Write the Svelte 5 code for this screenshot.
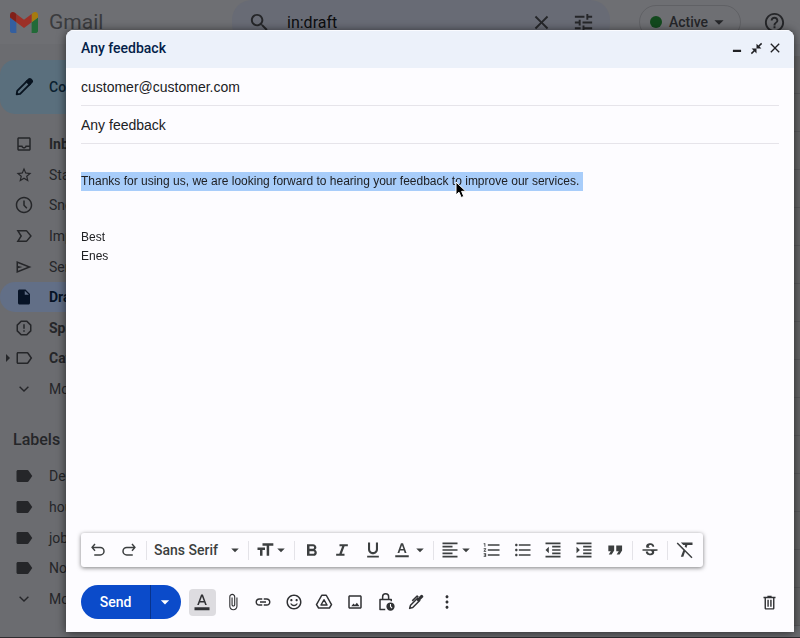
<script>
  const icons = {
    inbox: { fill: 'M19 3H5c-1.1 0-2 .9-2 2v14c0 1.1.9 2 2 2h14c1.1 0 2-.9 2-2V5c0-1.1-.9-2-2-2zm0 16H5v-3h3.56c.69 1.19 1.97 2 3.45 2s2.75-.81 3.45-2H19v3zm0-5h-4.99c0 1.1-.9 2-2 2s-2-.9-2-2H5V5h14v9z' },
    star: { fill: 'M22 9.24l-7.19-.62L12 2 9.19 8.63 2 9.24l5.46 4.73L5.82 21 12 17.27 18.18 21l-1.63-7.03L22 9.24zM12 15.4l-3.76 2.27 1-4.28-3.32-2.88 4.38-.38L12 6.1l1.71 4.04 4.38.38-3.32 2.88 1 4.28L12 15.4z' },
    clock: { fill: 'M12 1C5.93 1 1 5.93 1 12s4.93 11 11 11 11-4.93 11-11S18.07 1 12 1zm0 20c-4.97 0-9-4.03-9-9s4.03-9 9-9 9 4.03 9 9-4.03 9-9 9zM11 6h2v6l3.5 3.8-1.4 1.2L11 12.8z' },
    important: { fill: 'M15 20H2l5-8-5-8h13c.65 0 1.26.31 1.63.84L22.500 12l-5.870 7.160c-.37.52-.98.84-1.63.84zM5.600 18H15l5-6-5-6H5.600l3.800 6z' },
    send: { fill: 'M2 20V4l20 8-20 8zm2-3l12.500-5L4 7v3.500l6 1.500-6 1.500V17z' },
    draft: { fill: 'M14 2H6c-1.1 0-2 .9-2 2v16c0 1.1.89 2 1.99 2H18c1.1 0 2-.9 2-2V8l-6-6zm-1 7V3.500L18.500 9H13z' },
    spam: { fill: 'M16.200 2H7.800L2 7.800v8.400L7.800 22h8.400L22 16.200V7.800L16.200 2zM20 15.300L15.300 20H8.700L4 15.300V8.700L8.700 4h6.600L20 8.700v6.600zM11 7h2v6h-2zM11 15h2v2h-2z' },
    category: { fill: 'M16.500 4H4c-1.100 0-2 .9-2 2v12c0 1.100.9 2 2 2h12.500c.67 0 1.270-.33 1.630-.84L23 12l-4.870-7.160C17.770 4.330 17.170 4 16.500 4zM16.200 18H4V6h12.200l4.300 6z' },
    label: { fill: 'M16.500 4H4c-1.100 0-2 .9-2 2v12c0 1.100.9 2 2 2h12.500c.67 0 1.270-.33 1.630-.84L23 12l-4.870-7.160C17.770 4.330 17.170 4 16.500 4z' },
    expand: { fill: 'M17.200 8.200L12 13.400 6.800 8.200 5.500 9.500l6.500 6.500 6.500-6.500z' },
    search: { fill: 'M15.5 14h-.79l-.28-.27C15.41 12.59 16 11.11 16 9.5 16 5.91 13.09 3 9.5 3S3 5.91 3 9.5 5.91 16 9.5 16c1.61 0 3.09-.59 4.23-1.57l.27.28v.79l5 4.99L20.49 19l-4.99-5zm-6 0C7.01 14 5 11.99 5 9.5S7.01 5 9.5 5 14 7.01 14 9.5 11.99 14 9.5 14z' },
    close: { fill: 'M19 6.41L17.59 5 12 10.59 6.41 5 5 6.41 10.59 12 5 17.59 6.41 19 12 13.41 17.59 19 19 17.59 13.41 12z' },
    tune: { fill: 'M3 17v2h6v-2H3zM3 5v2h10V5H3zm10 16v-2h8v-2h-8v-2h-2v6h2zM7 9v2H3v2h4v2h2V9H7zm14 4v-2H11v2h10zm-6-4h2V7h4V5h-4V3h-2v6z' },
    help: { fill: 'M11 18h2v-2h-2v2zm1-16C6.48 2 2 6.48 2 12s4.48 10 10 10 10-4.48 10-10S17.52 2 12 2zm0 18c-4.41 0-8-3.59-8-8s3.59-8 8-8 8 3.59 8 8-3.59 8-8 8zm0-14c-2.21 0-4 1.79-4 4h2c0-1.1.9-2 2-2s2 .9 2 2c0 2-3 1.75-3 5h2c0-2.25 3-2.5 3-5 0-2.21-1.79-4-4-4z' },
    edit: { stroke: 'M4 20l.6-3.800L15.500 5.300l3.200 3.200L7.800 19.400z', fill: 'M13.500 6l3.200-3.200c1-1 2.300-.9 3.200 0l1.300 1.300c.9.900 1 2.200 0 3.200L18 10.500z' },
    minimize: { fill: 'M5 15h14v4H5z' },
    collapse: { fill: 'M22.500 3.500L17.500 8.500 21 12h-9V3l3.500 3.500 5-5zM3.500 22.500l5-5L12 21v-9H3l3.500 3.500-5 5z' },
    undo: { stroke: 'M8 4L4 8.500l4 4.500M4.500 8.500H15a5 5 0 0 1 0 10H7' },
    redo: { stroke: 'M16 4l4 4.500-4 4.500M19.500 8.500H9a5 5 0 0 0 0 10h8' },
    caret: { fill: 'M7 10l5 5 5-5z' },
    size: { fill: 'M9 4v3h5v12h3V7h5V4H9zm-6 8h3v7h3v-7h3V9H3v3z' },
    bold: { fill: 'M15.600 11.790c.97-.67 1.650-1.770 1.650-2.790 0-2.260-1.750-4-4-4H6v14h8.040c2.090 0 3.710-1.700 3.710-3.790 0-1.520-.86-2.820-2.150-3.420zM9 7.500h4c.83 0 1.500.67 1.500 1.500s-.67 1.500-1.500 1.500H9v-3zm4.500 9H9v-3h4.500c.83 0 1.500.67 1.500 1.500s-.67 1.500-1.500 1.500z' },
    italic: { fill: 'M9 5v2.500h3.200l-3.400 9H5V19h10v-2.500h-3.300l3.400-9H19V5z' },
    underline: { fill: 'M12 17c3.310 0 6-2.690 6-6V3h-2.500v8c0 1.930-1.570 3.500-3.500 3.500S8.500 12.930 8.500 11V3H6v8c0 3.310 2.690 6 6 6zm-7 2v2h14v-2H5z' },
    color: { fill: 'M3 19v2.500h18V19H3zm6.500-6.200h5l1 3.200H18L13.400 3h-2.800L6 16h2.500l1-3.200zM12 5.500l1.900 5.300h-3.800L12 5.500z' },
    format: { fill: 'M2 19v4h20v-4H2zm7-6.200h6l1.200 3.200h2.200L13.200 2h-2.400L5.600 16h2.200l1.200-3.200zM12 4.500l2.300 6.300H9.700L12 4.500z' },
    align: { fill: 'M15 15H3v2h12v-2zm0-8H3v2h12V7zM3 13h18v-2H3v2zm0 8h18v-2H3v2zM3 3v2h18V3H3z' },
    numbered: { fill: 'M2 17h2v.5H3v1h1v.5H2v1h3v-4H2v1zm1-9h1V4H2v1h1v3zm-1 3h1.8L2 13.1v.9h3v-1H3.2L5 10.9V10H2v1zm5-6v2h14V5H7zm0 14h14v-2H7v2zm0-6h14v-2H7v2z' },
    bulleted: { fill: 'M4 10.5c-.83 0-1.5.67-1.5 1.5s.67 1.5 1.5 1.5 1.5-.67 1.5-1.5-.67-1.5-1.5-1.5zm0-6c-.83 0-1.5.67-1.5 1.5S3.17 7.5 4 7.5 5.5 6.83 5.5 6 4.83 4.5 4 4.5zm0 12c-.83 0-1.5.68-1.5 1.5s.68 1.5 1.5 1.5 1.5-.68 1.5-1.5-.67-1.5-1.5-1.5zM7 19h14v-2H7v2zm0-6h14v-2H7v2zm0-8v2h14V5H7z' },
    outdent: { fill: 'M11 17h10v-2H11v2zm-8-5l4 4V8l-4 4zm0 9h18v-2H3v2zM3 3v2h18V3H3zm8 6h10V7H11v2zm0 4h10v-2H11v2z' },
    indent: { fill: 'M3 21h18v-2H3v2zM3 8v8l4-4-4-4zm8 9h10v-2H11v2zM3 3v2h18V3H3zm8 6h10V7H11v2zm0 4h10v-2H11v2z' },
    quote: { fill: 'M4.500 17.500h3.500l3-5V6.500H4v7h3zm9.500 0h3.500l3-5V6.500h-7v7h3z' },
    strike: { fill: 'M7.24 8.75c-.26-.48-.39-1.03-.39-1.67 0-.61.13-1.16.4-1.67.26-.5.63-.93 1.11-1.29.48-.35 1.05-.63 1.7-.83.66-.19 1.39-.29 2.18-.29.81 0 1.54.11 2.21.34.66.22 1.23.54 1.69.94.47.4.83.88 1.08 1.43.25.55.38 1.15.38 1.81h-2.5c0-.31-.05-.59-.15-.85-.09-.27-.24-.49-.44-.68-.2-.19-.45-.33-.75-.44-.3-.1-.66-.16-1.06-.16-.39 0-.74.04-1.03.13-.29.09-.53.21-.72.36-.19.16-.34.34-.44.55-.1.21-.15.43-.15.66 0 .48.25.88.74 1.21.38.25.77.48 1.41.7H7.39c-.05-.08-.11-.17-.15-.25zM22 13v-2H2v2h10.620c.18.07.4.14.55.2.37.17.66.34.87.51.21.17.35.36.43.57.07.2.11.43.11.69 0 .23-.05.45-.14.66-.09.2-.23.38-.42.53-.19.15-.42.26-.71.35-.29.08-.63.13-1.01.13-.43 0-.83-.04-1.18-.13s-.66-.23-.91-.42c-.25-.19-.45-.44-.59-.75-.14-.31-.25-.76-.25-1.21H6.4c0 .55.08 1.13.24 1.58.16.45.37.85.65 1.21.28.35.6.66.98.92.37.26.78.48 1.22.65.44.17.9.3 1.38.39.48.08.96.13 1.44.13.8 0 1.53-.09 2.18-.28s1.21-.45 1.67-.79c.46-.34.82-.77 1.07-1.27s.38-1.07.38-1.71c0-.6-.1-1.14-.31-1.61z' },
    clear: { fill: 'M3.270 3L2 4.270l7.970 7.970L7 20h3l1.970-5.760L19.730 22 21 20.730zM7 3l2.900 3h2.300l-.6 1.700 2 2L14.900 6H21V3z' },
    attach: { fill: 'M16.5 6v11.5c0 2.21-1.79 4-4 4s-4-1.79-4-4V5c0-1.38 1.12-2.5 2.5-2.5s2.5 1.12 2.5 2.5v10.5c0 .55-.45 1-1 1s-1-.45-1-1V6H10v9.5c0 1.38 1.12 2.5 2.5 2.5s2.5-1.12 2.5-2.5V5c0-2.21-1.79-4-4-4S7 2.79 7 5v12.5c0 3.04 2.46 5.500 5.500 5.500s5.500-2.460 5.500-5.500V6h-1.500z' },
    link: { fill: 'M3.9 12c0-1.71 1.39-3.1 3.1-3.1h4V7H7c-2.76 0-5 2.24-5 5s2.24 5 5 5h4v-1.9H7c-1.71 0-3.1-1.39-3.1-3.1zM8 13h8v-2H8v2zm9-6h-4v1.9h4c1.71 0 3.1 1.39 3.1 3.1s-1.39 3.1-3.1 3.1h-4V17h4c2.76 0 5-2.24 5-5s-2.24-5-5-5z' },
    emoji: { fill: 'M11.99 2C6.47 2 2 6.48 2 12s4.47 10 9.99 10C17.52 22 22 17.52 22 12S17.52 2 11.99 2zM12 20c-4.42 0-8-3.58-8-8s3.58-8 8-8 8 3.58 8 8-3.58 8-8 8zm3.5-9c.83 0 1.5-.67 1.5-1.5S16.330 8 15.500 8 14 8.670 14 9.500s.67 1.500 1.500 1.500zm-7 0c.83 0 1.500-.67 1.500-1.500S9.330 8 8.500 8 7 8.670 7 9.500 7.670 11 8.500 11zm3.500 6.500c2.330 0 4.310-1.460 5.110-3.500h-1.900c-.7 1.100-1.900 1.800-3.210 1.800S9.500 15.100 8.800 14H6.890c.8 2.040 2.780 3.500 5.110 3.500z' },
    drive: { stroke: 'M9 3h6l7 12.500-2.800 4.500H4.800L2 15.500zM12 9l4 7H8z' },
    image: { fill: 'M19 5v14H5V5h14m0-2H5c-1.1 0-2 .9-2 2v14c0 1.1.9 2 2 2h14c1.1 0 2-.9 2-2V5c0-1.1-.9-2-2-2zM14.500 13l-2.500 3-2-2-3 3.500h11z' },
    lock: { stroke: 'M11 22H4V8.500h15V11M7.500 8.500V5a4 4 0 0 1 8 0v3.500', fill: 'M18 12.500a5.500 5.500 0 1 0 0 11 5.500 5.500 0 0 0 0-11zm-.7 2.300h1.400v2.900l1.900 1.900-1 1-2.300-2.300z' },
    pen: { stroke: 'M3.500 20.500l1.200-4.200L14 7l3 3-9.300 9.300zM7 10.500l6.500-6.500 1.500 1.500', fill: 'M12.500 9l5.300-5.600c1.300-1.300 2.400-1.200 3.300-.2.900.9.900 2 0 2.900L15 12z' },
    more: { fill: 'M12 7c1.100 0 2-.9 2-2s-.9-2-2-2-2 .9-2 2 .9 2 2 2zm0 3c-1.100 0-2 .9-2 2s.9 2 2 2 2-.9 2-2-.9-2-2-2zm0 7c-1.100 0-2 .9-2 2s.9 2 2 2 2-.9 2-2-.9-2-2-2z' },
    trash: { fill: 'M15 4V2.500H9V4H3.500v2H5v14c0 1.100.9 2 2 2h10c1.100 0 2-.9 2-2V6h1.500V4zM17 20H7V6h10zM9 8h2v10H9zm4 0h2v10h-2z' }
  };

  const folders = [
    { icon: 'inbox', name: 'Inbox', strong: true },
    { icon: 'star', name: 'Starred' },
    { icon: 'clock', name: 'Snoozed' },
    { icon: 'important', name: 'Important' },
    { icon: 'send', name: 'Sent' },
    { icon: 'draft', name: 'Drafts', strong: true, current: true },
    { icon: 'spam', name: 'Spam', strong: true },
    { icon: 'category', name: 'Categories', strong: true, nested: true },
    { icon: 'expand', name: 'More' }
  ];

  const labels = [
    { icon: 'label', name: 'Design' },
    { icon: 'label', name: 'house' },
    { icon: 'label', name: 'jobs' },
    { icon: 'label', name: 'Notes' },
    { icon: 'expand', name: 'More' }
  ];

  const styles = [['bold', 'Bold'], ['italic', 'Italic'], ['underline', 'Underline']];
  const blocks = [
    ['numbered', 'Numbered list'],
    ['bulleted', 'Bulleted list'],
    ['outdent', 'Indent less'],
    ['indent', 'Indent more'],
    ['quote', 'Quote']
  ];
  const inserts = [
    ['format', 'Formatting options'],
    ['attach', 'Attach files'],
    ['link', 'Insert link'],
    ['emoji', 'Insert emoji'],
    ['drive', 'Insert files using Drive'],
    ['image', 'Insert photo'],
    ['lock', 'Confidential mode'],
    ['pen', 'Insert signature'],
    ['more', 'More options']
  ];

  let query = $state('in:draft');
  let to = $state('customer@customer.com');
  let subject = $state('Any feedback');
  let formatting = $state(true);
</script>

{#snippet icon(name, size)}
  <svg viewBox="0 0 24 24" width={size} height={size} aria-hidden="true">
    {#if icons[name].fill}<path d={icons[name].fill} fill="currentColor" fill-rule="evenodd" />{/if}
    {#if icons[name].stroke}
      <path d={icons[name].stroke} fill="none" stroke="currentColor" stroke-width="2" stroke-linejoin="round" />
    {/if}
  </svg>
{/snippet}

{#snippet navList(items)}
  {#each items as item}
    <a href="#{item.name}" class:strong={item.strong} class:current={item.current}>
      <span class="twisty">{#if item.nested}<i></i>{/if}</span>
      {@render icon(item.icon, 18)}
      <span class="name">{item.name}</span>
    </a>
  {/each}
{/snippet}

<div class="app">
  <header>
    <div class="brand">
      <svg viewBox="52 42 88 66" width="28" height="21" aria-hidden="true">
        <path fill="#345f9f" d="M58 108h14V74L52 59v43c0 3.320 2.690 6 6 6" />
        <path fill="#226a38" d="M120 108h14c3.320 0 6-2.690 6-6V59l-20 15" />
        <path fill="#a67b0e" d="M120 48v26l20-15v-8c0-7.420-8.470-11.650-14.400-7.200" />
        <path fill="#9c3027" d="M72 74V48l24 18 24-18v26L96 92" />
        <path fill="#812019" d="M52 51v8l20 15V48l-5.600-4.200c-5.940-4.450-14.400-.22-14.400 7.200" />
      </svg>
      <span>Gmail</span>
    </div>
    <form class="search" role="search">
      {@render icon('search', 23)}
      <input aria-label="Search mail" bind:value={query} />
      <button type="button" aria-label="Clear search">{@render icon('close', 23)}</button>
      <button type="button" aria-label="Search options">{@render icon('tune', 23)}</button>
    </form>
    <button class="status"><i></i>Active{@render icon('caret', 22)}</button>
    <button class="help" aria-label="Support">{@render icon('help', 23)}</button>
  </header>

  <div class="columns">
    <aside>
      <button class="compose">{@render icon('edit', 22)}<span>Compose</span></button>
      <nav class="folders" aria-label="Folders">{@render navList(folders)}</nav>
      <h2>Labels</h2>
      <nav class="labels" aria-label="Labels">{@render navList(labels)}</nav>
    </aside>
    <main>
      {#each Array(15) as _}<div class="mail"></div>{/each}
    </main>
  </div>
</div>

<div class="dialog" role="dialog" aria-label="Any feedback">
  <div class="title">
    <h1>Any feedback</h1>
    <button aria-label="Minimize">{@render icon('minimize', 14)}</button>
    <button aria-label="Exit full screen">{@render icon('collapse', 13)}</button>
    <button aria-label="Save and close">{@render icon('close', 16)}</button>
  </div>

  <div class="fields">
    <input aria-label="To" bind:value={to} />
    <input aria-label="Subject" bind:value={subject} />
  </div>

  <div class="message" role="textbox" aria-label="Message body" aria-multiline="true" tabindex="0">
    <p class="marked"><mark>Thanks for using us, we are looking forward to hearing your feedback to improve our services.</mark></p>
    <p>Best</p>
    <p>Enes</p>
    <svg class="pointer" viewBox="0 0 12 18" width="12" height="18" aria-hidden="true">
      <path d="M1 1v13l3-2.800 2.200 5.300 2.600-1.100-2.200-5.100h4.200z" fill="#000" stroke="#fff" stroke-width="1" />
    </svg>
  </div>

  {#if formatting}
    <div class="toolbar" role="toolbar" aria-label="Formatting">
      <div class="history">
        <button aria-label="Undo">{@render icon('undo', 18)}</button>
        <button aria-label="Redo">{@render icon('redo', 18)}</button>
      </div>
      <hr />
      <label class="font">
        <select aria-label="Font">
          <option>Sans Serif</option>
          <option>Serif</option>
        </select>
        {@render icon('caret', 18)}
      </label>
      <hr />
      <button class="drop" aria-label="Size">{@render icon('size', 20)}{@render icon('caret', 18)}</button>
      <hr />
      <div class="styles">
        {#each styles as [name, title]}<button aria-label={title}>{@render icon(name, 20)}</button>{/each}
      </div>
      <button class="drop color" aria-label="Text color">{@render icon('color', 18)}{@render icon('caret', 18)}</button>
      <hr />
      <button class="drop" aria-label="Align">{@render icon('align', 20)}{@render icon('caret', 18)}</button>
      <div class="blocks">
        {#each blocks as [name, title]}<button aria-label={title}>{@render icon(name, 20)}</button>{/each}
      </div>
      <hr />
      <button class="single" aria-label="Strikethrough">{@render icon('strike', 18)}</button>
      <hr />
      <button class="single" aria-label="Remove formatting">{@render icon('clear', 20)}</button>
    </div>
  {/if}

  <div class="actions">
    <div class="send">
      <button>Send</button>
      <button class="more" aria-label="More send options">{@render icon('caret', 20)}</button>
    </div>
    <div class="inserts">
      {#each inserts as [name, title]}
        <button
          aria-label={title}
          class:pressed={name === 'format' && formatting}
          onclick={() => { if (name === 'format') formatting = !formatting; }}
        ><span>{@render icon(name, 18)}</span></button>
      {/each}
    </div>
    <button class="discard" aria-label="Discard draft">{@render icon('trash', 17)}</button>
  </div>
</div>

<style>
  :global(body) {
    margin: 0;
    background: #6b6c70;
    font-family: Roboto, "Liberation Sans", sans-serif;
  }
  button, input, select {
    border: 0;
    padding: 0;
    margin: 0;
    background: none;
    color: inherit;
    font: inherit;
    outline: 0;
  }
  button {
    display: flex;
    align-items: center;
    justify-content: center;
  }
  svg { display: block; flex: none; }
  h1, h2, p { margin: 0; }

  .app {
    box-sizing: border-box;
    height: 100vh;
    overflow: hidden;
    border-bottom: 1px solid #2e2d30;
    color: #252629;
  }
  header {
    display: flex;
    height: 44px;
    background: #6e6f73;
    box-sizing: border-box;
  }
  .brand {
    display: flex;
    align-items: center;
    gap: 11px;
    width: 222px;
    padding-left: 10px;
    color: #3a3b3e;
    font-size: 21px;
  }
  .search {
    display: flex;
    align-items: center;
    flex: 1;
    min-width: 0;
    padding: 0 15px 0 16px;
    border-radius: 20px;
    background: #686b75;
  }
  .search input {
    flex: 1;
    min-width: 0;
    margin-left: 16px;
    color: #0c0d0f;
    font-size: 16px;
  }
  .search button + button { margin-left: 19px; }
  .status {
    width: 102px;
    height: 34px;
    margin: 5px 0 0 29px;
    border: 1px solid #606165;
    border-radius: 17px;
    font-size: 14px;
    font-weight: 500;
  }
  .status i {
    width: 12px;
    height: 12px;
    margin-right: 7px;
    border-radius: 50%;
    background: #12491d;
  }
  .help { margin: 0 14px 0 22px; }

  .columns { display: flex; }
  aside {
    width: 66px;
    overflow: hidden;
    padding-top: 16px;
    font-size: 14px;
    white-space: nowrap;
  }
  .compose {
    justify-content: flex-start;
    gap: 14px;
    width: 134px;
    height: 54px;
    padding-left: 13px;
    border-radius: 15px;
    background: #5a6f7d;
    color: #08131f;
    font-weight: 500;
  }
  .compose span { color: #0b1f30; }
  nav {
    display: flex;
    flex-direction: column;
    justify-content: space-between;
  }
  .folders { height: 275px; margin-top: 15px; }
  .labels { height: 153px; }
  nav a {
    display: flex;
    align-items: center;
    width: 200px;
    height: 30px;
    border-radius: 15px;
    color: inherit;
    text-decoration: none;
  }
  .twisty { width: 15px; }
  .twisty i {
    display: block;
    width: 0;
    margin-left: 6px;
    border: 4px solid transparent;
    border-left-color: currentColor;
    border-right-width: 0;
  }
  .name { margin-left: 16px; }
  .strong { font-weight: 700; }
  .current { background: #626f87; color: #071326; }
  h2 {
    margin: 24px 0 9px 13px;
    font-size: 16px;
    line-height: 24px;
    font-weight: 500;
  }
  main {
    flex: 1;
    margin-top: 12px;
    background: #646466;
  }
  .mail {
    height: 38px;
    box-sizing: border-box;
    border-bottom: 1px solid #59595c;
  }

  .dialog {
    position: fixed;
    inset: 30px 6px 6px 66px;
    display: flex;
    flex-direction: column;
    overflow: hidden;
    border-radius: 8px 8px 0 0;
    background: #fdfcff;
    color: #202124;
    filter: drop-shadow(0 1px 5px rgba(0, 0, 0, 0.6));
  }
  .title {
    display: flex;
    align-items: center;
    gap: 5px;
    height: 38px;
    padding: 0 12px 3px 15px;
    box-sizing: border-box;
    border-top: 1px solid #fafbff;
    background: #ecf1fa;
  }
  h1 {
    flex: 1;
    color: #041e49;
    font-size: 14px;
    font-weight: 500;
  }
  .title button { width: 14px; height: 24px; }
  .title button svg { margin: 0 -1px; }
  .fields {
    display: flex;
    flex-direction: column;
    padding: 0 15px;
    font-family: "Liberation Sans", Arial, sans-serif;
    font-size: 14px;
  }
  .fields input {
    height: 38px;
    box-sizing: border-box;
    border-bottom: 1px solid #e6e4ea;
  }
  .message {
    position: relative;
    flex: 1;
    padding: 28px 15px;
    font-family: "Liberation Sans", Arial, sans-serif;
    font-size: 12px;
    line-height: 19px;
  }
  .marked { display: flex; margin-bottom: 37px; }
  mark {
    padding-right: 4px;
    background: #a8cdfa;
    color: inherit;
  }
  .pointer {
    position: absolute;
    top: 37px;
    left: 389px;
  }

  .toolbar {
    display: flex;
    align-items: center;
    align-self: flex-start;
    height: 34px;
    margin-left: 15px;
    padding: 0 3px 0 2px;
    border-radius: 3px;
    background: #fdfcff;
    box-shadow: 0 1px 4px rgba(0, 0, 0, 0.5);
    color: #3c3f40;
  }
  .toolbar button { height: 28px; }
  hr {
    width: 1px;
    height: 19px;
    margin: 0 2px;
    border: 0;
    background: #e4e3e8;
  }
  .history, .styles, .blocks, .inserts {
    display: grid;
    grid-auto-flow: column;
    grid-auto-columns: 1fr;
  }
  .history { width: 61px; }
  .styles { width: 91px; }
  .blocks { width: 153px; }
  .single { width: 30px; }
  .font {
    display: flex;
    align-items: center;
    width: 97px;
    font-size: 14px;
    font-weight: 500;
  }
  .font select {
    flex: 1;
    min-width: 0;
    padding-left: 5px;
    appearance: none;
  }
  .font svg { margin-right: 2px; }
  .toolbar .drop { width: 41px; padding-left: 2px; }
  .drop svg + svg { margin-left: -3px; }
  .toolbar .color { width: 43px; }
  .color svg + svg { margin-left: 0; }

  .actions {
    display: flex;
    align-items: center;
    height: 34px;
    margin: 18px 16px 13px 15px;
    color: #303134;
  }
  .send {
    display: flex;
    height: 34px;
    margin-right: 6px;
    overflow: hidden;
    border-radius: 17px;
    background: #0b4bca;
    color: #fff;
    font-size: 14px;
    font-weight: 500;
  }
  .send button { width: 69px; }
  .send .more {
    width: 31px;
    box-sizing: border-box;
    padding-right: 3px;
    border-left: 1px solid #08338c;
  }
  .inserts { width: 275px; }
  .inserts span {
    display: grid;
    place-items: center;
    width: 27px;
    height: 27px;
    border-radius: 4px;
  }
  .pressed span { background: #dddce0; }
  .discard { width: 18px; margin-left: auto; }
</style>
